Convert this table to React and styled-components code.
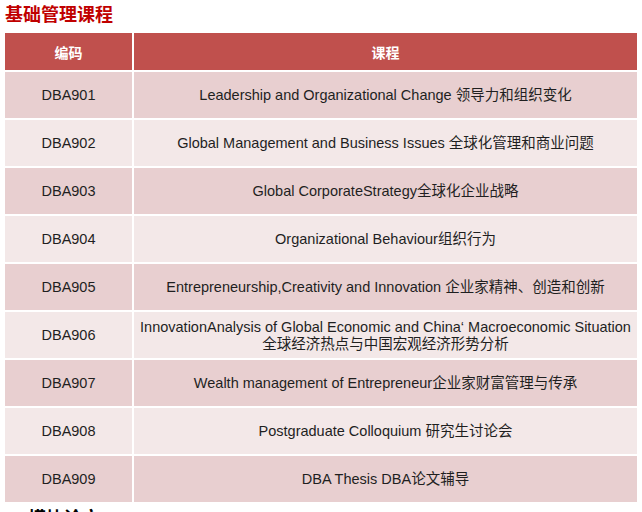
import React from "react";
import styled, { createGlobalStyle } from "styled-components";

const Global = createGlobalStyle`
  html, body { margin: 0; padding: 0; background: #fff; overflow: hidden; }
  body { font-family: "Liberation Sans", Arial, "Noto Sans CJK SC", sans-serif; }
`;

const Page = styled.div`
  width: 642px;
  height: 512px;
  overflow: hidden;
  padding: 2px 5px 0 5px;
  box-sizing: border-box;
`;

const Title = styled.h2`
  margin: 0;
  font-size: 18px;
  line-height: 22px;
  font-weight: bold;
  color: ${(p) => p.$color || "#c00000"};
  font-family: "Noto Sans CJK SC", sans-serif;
  margin-left: ${(p) => p.$indent || 0}px;
`;

const Table = styled.div`
  display: grid;
  grid-template-columns: 127px 503px;
  column-gap: 2px;
  row-gap: 2px;
  margin-top: 9px;
  margin-bottom: 4px;
`;

const HeadCell = styled.div`
  background: #c0504d;
  color: #fff;
  height: 37px;
  display: flex;
  align-items: center;
  justify-content: center;
  font-size: 14px;
  font-weight: bold;
  font-family: "Noto Sans CJK SC", sans-serif;
`;

const Cell = styled.div`
  background: ${(p) => (p.$odd ? "#e8cfd0" : "#f3e8e8")};
  height: 46px;
  display: flex;
  flex-direction: column;
  align-items: center;
  justify-content: center;
  text-align: center;
  font-size: 14.5px;
  line-height: 17px;
  color: #1f1f1f;
  padding-top: 1px;
  box-sizing: border-box;
  font-family: "Liberation Sans", Arial, "Noto Sans CJK SC", sans-serif;
`;

const rows = [
  ["DBA901", ["Leadership and Organizational Change 领导力和组织变化"]],
  ["DBA902", ["Global Management and Business Issues 全球化管理和商业问题"]],
  ["DBA903", ["Global CorporateStrategy全球化企业战略"]],
  ["DBA904", ["Organizational Behaviour组织行为"]],
  ["DBA905", ["Entrepreneurship,Creativity and Innovation 企业家精神、创造和创新"]],
  [
    "DBA906",
    [
      "InnovationAnalysis of Global Economic and China‘ Macroeconomic Situation",
      "全球经济热点与中国宏观经济形势分析",
    ],
  ],
  ["DBA907", ["Wealth management of Entrepreneur企业家财富管理与传承"]],
  ["DBA908", ["Postgraduate Colloquium 研究生讨论会"]],
  ["DBA909", ["DBA Thesis DBA论文辅导"]],
];

export default function App() {
  return (
    <>
      <Global />
      <Page>
        <Title>基础管理课程</Title>
        <Table>
          <HeadCell>编码</HeadCell>
          <HeadCell>课程</HeadCell>
          {rows.map(([code, lines], i) => (
            <React.Fragment key={code}>
              <Cell $odd={i % 2 === 0}>{code}</Cell>
              <Cell $odd={i % 2 === 0}>
                {lines.map((l) => (
                  <span key={l}>{l}</span>
                ))}
              </Cell>
            </React.Fragment>
          ))}
        </Table>
        <Title $color="#000" $indent={23}>模块论文</Title>
      </Page>
    </>
  );
}
